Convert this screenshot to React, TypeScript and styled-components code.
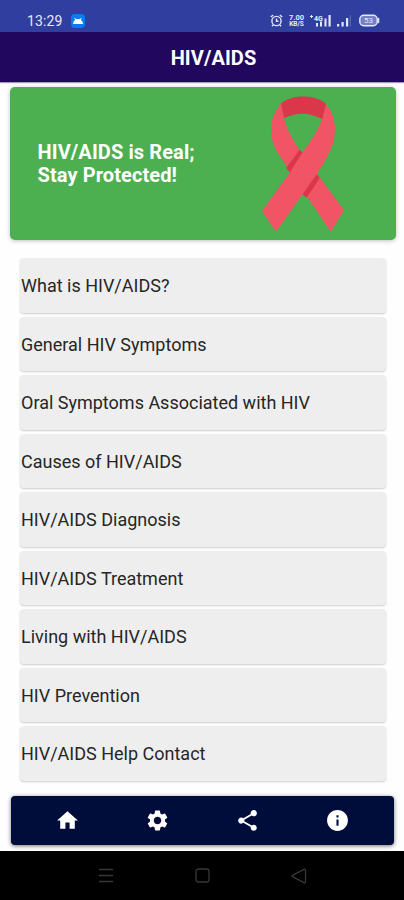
import React from 'react';
import styled, { createGlobalStyle } from 'styled-components';
import { MdHome, MdSettings, MdShare, MdInfo } from 'react-icons/md';

const GlobalStyle = createGlobalStyle`
  * { box-sizing: border-box; }
  body { margin: 0; background: #fff; font-family: Roboto, sans-serif; }
`;

const Screen = styled.div`
  width: 404px;
  height: 900px;
  display: flex;
  flex-direction: column;
  background: #fefefe;
  overflow: hidden;
`;

const StatusBar = styled.div`
  height: 32px;
  flex: none;
  display: flex;
  align-items: center;
  justify-content: space-between;
  padding: 9px 24px 0 27px;
  background: #303f9f;
  color: #e4e8fa;
`;

const StatusGroup = styled.div<{ $gap: number }>`
  display: flex;
  align-items: center;
  gap: ${(p) => p.$gap}px;
`;

const Clock = styled.span`
  font-size: 14px;
  line-height: 16px;
  letter-spacing: 0.1px;
`;

const Speed = styled.span`
  display: flex;
  flex-direction: column;
  align-items: center;
  width: 18px;
  font-size: 8px;
  line-height: 7px;
  font-weight: 700;
`;

const SpeedPart = styled.span<{ $size: number }>`
  display: block;
  height: 7px;
  font-size: ${(p) => p.$size}px;
  line-height: 7px;
`;

const TitleBar = styled.header`
  height: 49.5px;
  flex: none;
  display: flex;
  align-items: center;
  justify-content: center;
  padding: 3px 0 0 23px;
  background: #21075e;
  color: #fff;
  box-shadow: 0 1px 1px rgba(33, 7, 94, 0.4);
`;

const Title = styled.h1`
  margin: 0;
  font-size: 20px;
  line-height: 24px;
  font-weight: 700;
  letter-spacing: 0.08px;
`;

const Banner = styled.section`
  flex: none;
  height: 152.5px;
  margin: 5.5px 8px 0 9.5px;
  padding: 9px 51.5px 0 28px;
  display: flex;
  justify-content: space-between;
  background: #4caf50;
  border-radius: 5px;
  box-shadow: 0 1px 4px rgba(0, 0, 0, 0.25);
`;

const BannerText = styled.p`
  margin: 44.5px 0 0;
  color: #fff;
  font-size: 20px;
  line-height: 23.5px;
  font-weight: 700;
  letter-spacing: 0.1px;
`;

const TopicList = styled.ul`
  flex: none;
  list-style: none;
  margin: 18.5px 18.5px 0 19.5px;
  padding: 0;
  display: flex;
  flex-direction: column;
  gap: 4px;
`;

const Topic = styled.li`
  height: 54.5px;
  display: flex;
  align-items: center;
  padding: 1px 0 0 1.5px;
  background: #eeeeee;
  border-radius: 4px;
  box-shadow: 0 1px 2px rgba(0, 0, 0, 0.2);
  color: #262626;
  font-size: 18px;
  white-space: nowrap;
`;

const TabBar = styled.nav`
  flex: none;
  height: 49.5px;
  margin: 15px 10px 5.5px 11px;
  padding: 1px 12px 0;
  display: grid;
  grid-template-columns: repeat(4, 89.8px);
  align-items: center;
  justify-items: center;
  background: #000c39;
  border-radius: 4px;
  box-shadow: 0 1px 4px rgba(0, 0, 0, 0.55);
  color: #fff;
`;

const SystemNav = styled.div`
  flex: 1;
  display: grid;
  grid-template-columns: repeat(3, 96.5px);
  justify-content: center;
  align-items: center;
  justify-items: center;
  padding-top: 1px;
  background: #000;
`;

const topics = [
  'What is HIV/AIDS?',
  'General HIV Symptoms',
  'Oral Symptoms Associated with HIV',
  'Causes of HIV/AIDS',
  'HIV/AIDS Diagnosis',
  'HIV/AIDS Treatment',
  'Living with HIV/AIDS',
  'HIV Prevention',
  'HIV/AIDS Help Contact',
];

const AndroidBadge = () => (
  <svg width="14" height="14" viewBox="0 0 14 14">
    <rect width="14" height="14" rx="4" fill="#087bf5" />
    <path d="M2 10a5 5 0 0 1 10 0z" fill="#fff" />
    <path d="M3.6 4l1.600 2.400M10.400 4L8.800 6.400" stroke="#fff" strokeWidth="1" />
  </svg>
);

const Alarm = () => (
  <svg width="13" height="13" viewBox="0 0 13 13" fill="none" stroke="currentColor" strokeWidth="1.400">
    <circle cx="6.500" cy="7" r="4.600" />
    <path d="M6.500 4.500V7.300H8.500M.8 3l2.400-2M12.200 3L9.800 1M3 11l-1 1.300M10 11l1 1.300" />
  </svg>
);

const Signal4G = () => (
  <svg width="22" height="13" viewBox="0 0 22 13" fill="currentColor">
    <path d="M0 2.500h3M1.500 1v3" stroke="currentColor" strokeWidth="1" />
    <text x="4" y="6.500" fontSize="7" fontWeight="700" fontFamily="Roboto, sans-serif">4G</text>
    <path d="M6 9h2v3.500H6zM10 7.500h2v5h-2zM14.500 4.500h2v8h-2zM18.500 1h2.200v11.500h-2.200z" />
  </svg>
);

const Signal = () => (
  <svg width="14" height="13" viewBox="0 0 14 13" fill="currentColor">
    <path d="M0 10h2.200v2.500H0zM4.500 8h2.200v4.500H4.500zM9 4h2.200v8.500H9z" />
    <path d="M12.800 1h.9v11.500h-.9z" opacity=".3" />
  </svg>
);

const Battery = () => (
  <svg width="21" height="13" viewBox="0 0 21 13">
    <rect x=".8" y="1.300" width="17.400" height="10.400" rx="4" fill="#7480c4" stroke="currentColor" strokeWidth="1.400" />
    <path d="M19.500 4.500v4" stroke="currentColor" strokeWidth="1.500" strokeLinecap="round" />
    <text x="9.500" y="9.300" textAnchor="middle" fontSize="8" fontFamily="Roboto, sans-serif" fill="currentColor">53</text>
  </svg>
);

const BatterySlot = styled.div`
  display: flex;
  margin-left: 4px;
`;

const Ribbon = () => (
  <svg width="82.700" height="136" viewBox="66 46 248 408">
    <path d="M122 70C150 40 230 40 258 70L248 116Q190 84 132 113Z" fill="#db374b" />
    <path d="M123 69C82 116 86 178 119 225L272 453L312 389L185 216C159 180 141 148 132 113Z" fill="#f15464" />
    <path d="M178 207L194 222L152 277L138 262Q158 237 178 207ZM225 274L239 291Q222 322 199 351L184 336Z" fill="#db374b" />
    <path d="M258 70C293 112 292 172 266 219Q249 253 230 281L108 453L66 391L153 270L190 211Q230 160 248 112Z" fill="#f15464" />
  </svg>
);

const Recents = () => (
  <svg width="14" height="15" viewBox="0 0 14 15" stroke="#373737" strokeWidth="1.500">
    <path d="M0 1.500h14M0 7.500h14M0 13.500h14" />
  </svg>
);

const HomeSquare = () => (
  <svg width="15" height="15" viewBox="0 0 15 15" fill="none" stroke="#373737" strokeWidth="1.300">
    <rect x="1" y="1" width="13" height="13" rx="2.500" />
  </svg>
);

const Back = () => (
  <svg width="16" height="16" viewBox="0 0 16 16" fill="none" stroke="#373737" strokeWidth="1.300" strokeLinejoin="round">
    <path d="M1.500 7.300L13 1.300q1.500-.6 1.500 1v11.400q0 1.600-1.500 1L1.500 8.700q-1-.7 0-1.400z" />
  </svg>
);

export default function App() {
  return (
    <Screen>
      <GlobalStyle />
      <StatusBar>
        <StatusGroup $gap={9}>
          <Clock>13:29</Clock>
          <AndroidBadge />
        </StatusGroup>
        <StatusGroup $gap={4.5}>
          <Alarm />
          <Speed>
            <SpeedPart $size={7.5}>7.00</SpeedPart>
            <SpeedPart $size={6.5}>KB/S</SpeedPart>
          </Speed>
          <Signal4G />
          <Signal />
          <BatterySlot>
            <Battery />
          </BatterySlot>
        </StatusGroup>
      </StatusBar>
      <TitleBar>
        <Title>HIV/AIDS</Title>
      </TitleBar>
      <Banner>
        <BannerText>
          HIV/AIDS is Real;
          <br />
          Stay Protected!
        </BannerText>
        <Ribbon />
      </Banner>
      <TopicList>
        {topics.map((topic) => (
          <Topic key={topic}>{topic}</Topic>
        ))}
      </TopicList>
      <TabBar>
        <MdHome size={25} />
        <MdSettings size={25} />
        <MdShare size={25} />
        <MdInfo size={25} />
      </TabBar>
      <SystemNav>
        <Recents />
        <HomeSquare />
        <Back />
      </SystemNav>
    </Screen>
  );
}
